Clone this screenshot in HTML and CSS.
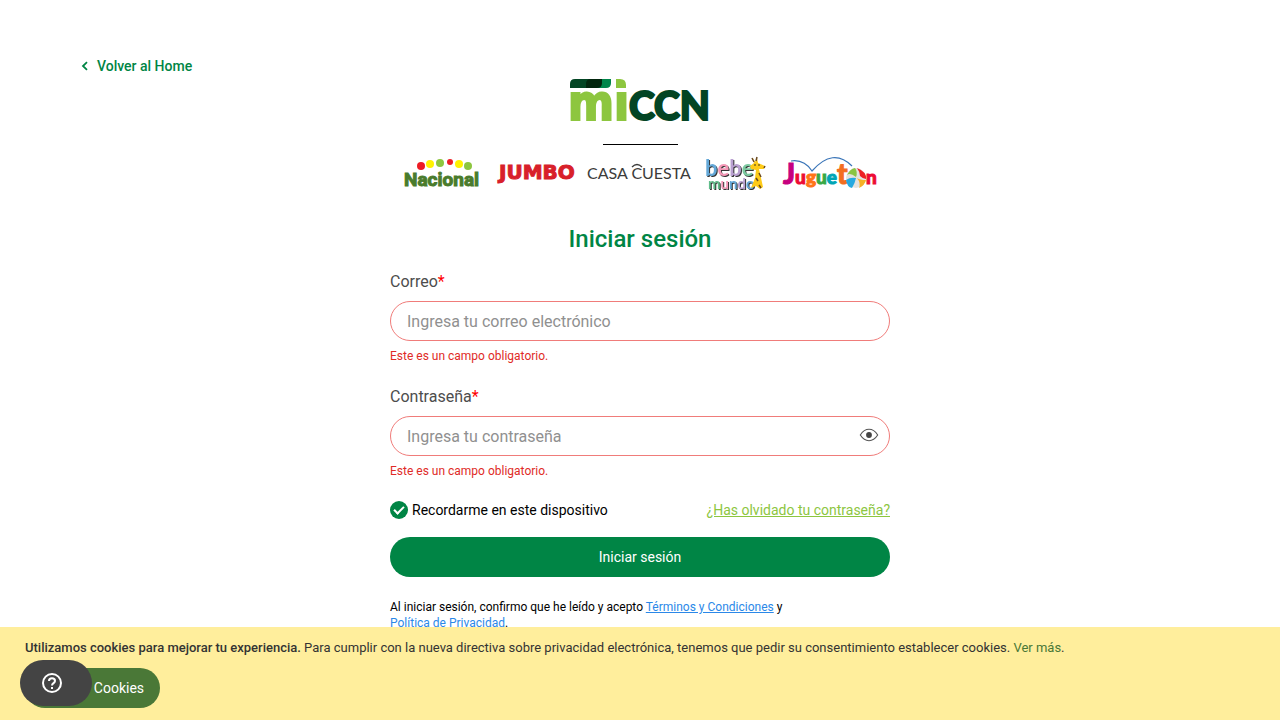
FILE: index.html
```html
<!DOCTYPE html>
<html lang="es">
<head>
<meta charset="utf-8">
<meta name="viewport" content="width=device-width, initial-scale=1">
<title>Iniciar sesión</title>
<link rel="stylesheet" href="styles.css">
</head>
<body>
<header class="top">
  <a class="back" href="#"><svg width="8" height="10" viewBox="0 0 8 10" aria-hidden="true"><path d="M6 1.2 2 5l4 3.8" fill="none" stroke="currentColor" stroke-width="1.8"/></svg>Volver al Home</a>
</header>
<main class="login">
  <svg class="brand" width="142" height="44" viewBox="0 0 142 44" role="img" aria-label="miCCN">
    <path d="M1 10V6Q1 1 6 1H30L22 10Z" fill="#034524"/>
    <path d="M30 1H42V5Q42 10 37 10H28Z" fill="#00854a"/>
    <path d="M17 10V6Q17 1 22 1H33V5Q33 10 28 10Z" fill="#02260e"/>
    <path d="M47 1H51Q57 1 57 7V10H47Z" fill="#8dc63f"/>
    <text class="brand-mi" x="-1" y="42">mı</text>
    <text class="brand-ccn" x="60" y="42">CCN</text>
  </svg>
  <hr class="divider">
  <div class="stores">
    <svg width="83" height="40" viewBox="0 0 83 40" role="img" aria-label="Nacional">
      <circle cx="22" cy="13" r="4" fill="#ed1c24"/><circle cx="31" cy="11" r="4" fill="#fff200"/>
      <circle cx="41" cy="10" r="4" fill="#8dc63f"/><circle cx="51" cy="9" r="3" fill="#ed1c24"/>
      <circle cx="60" cy="11" r="4" fill="#fff200"/><circle cx="69" cy="13" r="4" fill="#8dc63f"/>
      <text class="nacional" x="5" y="33">Nacional</text>
    </svg>
    <svg width="89" height="40" viewBox="0 0 89 40" role="img" aria-label="Jumbo">
      <text class="jumbo" x="9" y="26">JUMBO</text>
    </svg>
    <svg width="104" height="40" viewBox="0 0 104 40" role="img" aria-label="Casa Cuesta">
      <text class="casa" x="0" y="26">CASA CUESTA</text>
      <path d="M45 14Q50 9 55 14" fill="none" stroke="#3c3c3b" stroke-width="1.3"/>
    </svg>
    <svg width="70" height="40" viewBox="0 0 70 40" role="img" aria-label="Bebe Mundo">
      <g class="bebe-mundo">
        <text class="bebe" x="6" y="23"><tspan fill="#64a8d8">b</tspan><tspan fill="#f497b6">e</tspan><tspan fill="#b9a0d0">b</tspan><tspan fill="#7cc9a0">e</tspan></text>
        <text class="mundo" x="9" y="36"><tspan fill="#62bd8b">m</tspan><tspan fill="#f497b6">u</tspan><tspan fill="#64a8d8">n</tspan><tspan fill="#b9a0d0">d</tspan><tspan fill="#64a8d8">o</tspan></text>
      </g>
      <path d="m54 5 2 4 2-4 1 5 7 3-1 3-5 0 2 9 2 9-3 2-4-3-5 2 4-10 1-8-5-1-1-3 4-3Z" fill="#fecb18"/>
      <path d="M53 5 55 9M58 4 57 8M60 20l2 4M57 25l2 3M60 32l2 3M65 15l1-2" stroke="#694922" stroke-width="1.5"/>
      <circle cx="56" cy="12" r=".8" fill="#222"/><circle cx="60" cy="12" r=".8" fill="#222"/>
    </svg>
    <svg width="104" height="40" viewBox="0 0 104 40" role="img" aria-label="Jugueton">
      <path d="M14 8Q27 6 35 18Q56-6 75 13" fill="none" stroke="#3a75b8" stroke-width="1.2"/>
      <text class="jugueton" x="6" y="31"><tspan fill="#c6007e" stroke="#c6007e" class="jug-j">J</tspan><tspan fill="#ed0b35" stroke="#ed0b35">u</tspan><tspan fill="#ff7417" stroke="#ff7417">g</tspan><tspan fill="#38a846" stroke="#38a846">u</tspan><tspan fill="#00a5b5" stroke="#00a5b5">e</tspan><tspan fill="#f36e21" stroke="#f36e21" class="jug-t">t</tspan></text>
      <g transform="translate(2 1)">
        <circle cx="77" cy="24" r="10" fill="#e4e2df"/>
        <path d="M78 14Q88 18 87 25Q84 25 81 22Q81 18 78 14Z" fill="#ed2024"/>
        <path d="M77 24Q71 23 67 26Q68 33 73 34Q76 29 77 24Z" fill="#26a9e0"/>
        <path d="M77 23Q71 18 68 21Q71 15 76 14Q79 18 77 23Z" fill="#8ac442"/>
        <path d="M78 24Q82 29 80 34Q86 31 87 26Q81 26 78 24Z" fill="#f5b126"/>
      </g>
      <text class="jugueton" x="89" y="31" fill="#ed0b35" stroke="#ed0b35">n</text>
    </svg>
  </div>
  <h1 class="title">Iniciar sesión</h1>
  <form class="form" novalidate>
    <div class="field">
      <label for="email">Correo<span class="required">*</span></label>
      <input class="input" id="email" type="email" placeholder="Ingresa tu correo electrónico" aria-describedby="email-error">
      <p class="error" id="email-error">Este es un campo obligatorio.</p>
    </div>
    <div class="field">
      <label for="password">Contraseña<span class="required">*</span></label>
      <div class="password">
        <input class="input" id="password" type="password" placeholder="Ingresa tu contraseña" aria-describedby="password-error">
        <button class="eye" type="button" aria-label="Mostrar contraseña"><svg width="20" height="14" viewBox="0 0 20 14"><path d="M1.3 7Q5 1.3 10 1.3T18.700 7Q15 12.700 10 12.700T1.300 7Z" fill="none" stroke="#555" stroke-width="1.1"/><circle cx="10" cy="7" r="2.900" fill="#444"/></svg></button>
      </div>
      <p class="error" id="password-error">Este es un campo obligatorio.</p>
    </div>
    <div class="options">
      <label class="remember"><input class="check" type="checkbox" checked>Recordarme en este dispositivo</label>
      <a class="forgot" href="#">¿Has olvidado tu contraseña?</a>
    </div>
    <button class="submit" type="submit">Iniciar sesión</button>
    <p class="terms">Al iniciar sesión, confirmo que he leído y acepto <a href="#">Términos y Condiciones</a> y <a href="#">Política de Privacidad</a>.</p>
  </form>
</main>
<aside class="cookies">
  <p class="cookies-text"><strong>Utilizamos cookies para mejorar tu experiencia.</strong> Para cumplir con la nueva directiva sobre privacidad electrónica, tenemos que pedir su consentimiento establecer cookies. <a href="#">Ver más</a>.</p>
  <button class="allow" type="button">Permitir Cookies</button>
</aside>
<button class="help" type="button" aria-label="Ayuda"><svg width="20" height="20" viewBox="0 0 20 20" fill="none" stroke="#fff" stroke-width="2"><circle cx="10" cy="10" r="9"/><path d="M7 8C7 4.300 13 4.300 13 8C13 10 10 10.300 10 12.500"/><path d="M10 14v2"/></svg></button>
</body>
</html>
```
FILE: styles.css
```css
* { box-sizing: border-box; }
body { margin: 0; background: #fff; color: #000; font-family: Roboto, sans-serif; font-size: 14px; }
p, h1 { margin: 0; }
button, input { font-family: inherit; }
button { border: 0; cursor: pointer; }

.top { display: flex; padding: 56px 80px 0; }
.back { display: flex; align-items: center; gap: 8px; padding-left: 1px; color: #008545; font-weight: 500; line-height: 20px; text-decoration: none; }

.login { display: flex; flex-direction: column; align-items: center; max-width: 500px; margin: 0 auto; padding: 2px 0 96px; }
.brand, .stores svg { display: block; flex: none; overflow: visible; }
.brand-mi { font: bold 49px "DejaVu Sans Condensed", "DejaVu Sans", sans-serif; fill: #8dc63f; stroke: #8dc63f; stroke-width: 2px; }
.brand-ccn { font: 900 39px Lato, sans-serif; fill: #034524; stroke: #034524; stroke-width: 2px; }
.divider { width: 75px; height: 1px; margin: 22px 0 8px; border: 0; background: #000; }
.stores { display: flex; justify-content: center; gap: 8px; }
.nacional { font: bold 19px Roboto, sans-serif; fill: #4a7b2c; stroke: #4a7b2c; stroke-width: 1px; }
.jumbo { font: bold 20px "DejaVu Sans", sans-serif; fill: #d8202a; stroke: #d8202a; stroke-width: 1px; }
.casa { font: 400 16px Lato, sans-serif; fill: #3c3c3b; }
.bebe { font: bold 22px Lato, sans-serif; }
.mundo { font: bold 15px Lato, sans-serif; }
.bebe-mundo { filter: drop-shadow(1px 1px 0 #333); }
.jugueton { font: 900 19px Lato, sans-serif; stroke-width: 1px; }
.jug-j, .jug-t { font-size: 28px; }

.title { margin-top: 30px; color: #008545; font-size: 24px; font-weight: 500; line-height: 32px; }
.form { width: 100%; margin-top: 17px; }
.field { display: flex; flex-direction: column; color: #4d4d4d; font-size: 16px; line-height: 20px; }
.field + .field { margin-top: 23px; }
.required { color: #f00; }
.input { width: 100%; height: 40px; margin-top: 9px; padding: 0 16px; border: 1px solid #f07c7a; border-radius: 20px; background: #fff; color: #333; font-size: 16px; }
.input::placeholder { color: #909090; opacity: 1; }
.error { margin-top: 7px; color: #e02b27; font-size: 12px; line-height: 16px; }
.password { position: relative; }
.password .input { display: block; padding-right: 44px; }
.eye { position: absolute; right: 11px; bottom: 14px; padding: 0; background: none; }
.eye svg { display: block; }
.options { display: flex; justify-content: space-between; align-items: center; margin-top: 21px; line-height: 20px; }
.remember { display: flex; align-items: center; gap: 4px; }
.check { appearance: none; display: grid; place-items: center; width: 18px; height: 18px; margin: 0; border-radius: 50%; background: #008545; }
.check:checked::before { content: ""; box-sizing: border-box; width: 10px; height: 6px; border: solid #fff; border-width: 0 0 2px 2px; transform: translateY(-1px) rotate(-45deg); }
.forgot { color: #8dc63f; }
.submit { display: block; width: 100%; height: 40px; margin-top: 17px; border-radius: 20px; background: #008545; color: #fff; font-size: 14px; }
.terms { max-width: 420px; margin-top: 22px; font-size: 12px; line-height: 16px; }
.terms a { color: #2b88e8; }

.cookies { position: fixed; right: 0; bottom: 0; left: 0; padding: 11px 25px 12px; background: #ffee9c; color: #333; font-size: 13px; line-height: 20px; }
.cookies-text strong { font-weight: 500; }
.cookies-text a { color: #4a7837; text-decoration: none; }
.allow { display: block; height: 40px; margin-top: 10px; padding: 0 16px; border-radius: 20px; background: #4a7837; color: #fff; font-size: 14px; }
.help { position: fixed; bottom: 14px; left: 20px; display: flex; align-items: center; width: 72px; height: 46px; padding: 0 22px; border-radius: 23px; background: #444; }
```
